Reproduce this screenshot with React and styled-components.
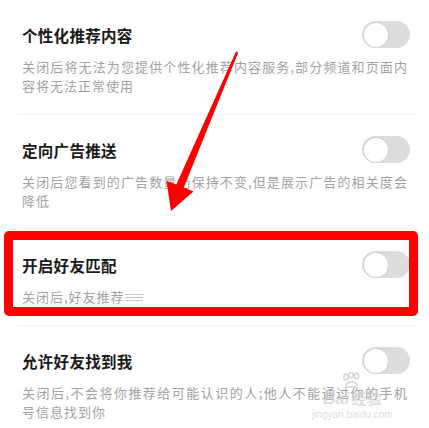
import React from 'react';
import styled, { createGlobalStyle } from 'styled-components';

const GlobalStyle = createGlobalStyle`
    html, body {
        margin: 0;
        padding: 0;
        background: #fff;
    }
    body {
        font-family: "Noto Sans CJK SC", "Noto Sans", sans-serif;
    }
`;

const Page = styled.div`
    position: relative;
    width: 429px;
    height: 428px;
    overflow: hidden;
    background: #fff;
`;
const Section = styled.div`
    position: relative;
    padding: 21px 0 19px;
`;
const Divider = styled.div`
    height: 1px;
    margin: 0 12px 0 18px;
    background: #f0f0f0;
`;
const Header = styled.div`
    display: flex;
    align-items: center;
    justify-content: space-between;
    height: 27px;
    padding: 0 19px 0 22px;
`;
const Title = styled.div`
    font-size: 15.5px;
    font-weight: 700;
    letter-spacing: 0.3px;
    color: #1a1a1a;
`;
const Toggle = styled.div`
    width: 48px;
    height: 27px;
    border-radius: 14px;
    background: #dcdcdc;
    display: flex;
    align-items: center;
    padding: 0 1.5px;
    box-sizing: border-box;
`;
const Knob = styled.div`
    width: 24px;
    height: 24px;
    border-radius: 50%;
    background: #fff;
    box-shadow: 0 0 0 1px #d2d2d2;
`;
const Desc = styled.div`
    margin-top: 9px;
    padding: 0 21px 0 22px;
    font-size: 13px;
    line-height: 19px;
    letter-spacing: 1px;
    text-align: justify;
    color: #a2a2a2;
`;
const Erased = styled.span`
    display: inline-block;
    width: 18px;
    height: 9px;
    vertical-align: middle;
    background: repeating-linear-gradient(
        to bottom,
        #c8c8c8 0 1px,
        transparent 1px 3px
    );
`;
// annotation overlays
const Frame = styled.div`
    position: absolute;
    top: 1px;
    left: 4px;
    width: 414px;
    height: 85px;
    border: 9px solid #fe0000;
    border-radius: 5px;
    box-sizing: border-box;
    pointer-events: none;
`;
const Overlay = styled.svg`
    position: absolute;
    top: 0;
    left: 0;
    pointer-events: none;
`;
const Watermark = styled.div`
    position: absolute;
    left: 312px;
    top: 372px;
    display: flex;
    flex-direction: column;
    align-items: center;
    color: rgba(205, 205, 205, 0.7);
    font-family: "Liberation Sans", sans-serif;
    line-height: 1;
    pointer-events: none;
`;
const MarkLogo = styled.div`
    display: flex;
    align-items: baseline;
    gap: 2px;
    margin-top: 2px;
    font-size: 17px;
    font-weight: 700;
    font-style: italic;
    span {
        font-family: "Noto Sans CJK SC", sans-serif;
        font-style: normal;
        font-size: 15px;
    }
`;
const MarkUrl = styled.div`
    font-size: 10px;
    margin-top: 3px;
`;

const items = [
    {
        title: '个性化推荐内容',
        desc: '关闭后将无法为您提供个性化推荐内容服务,部分频道和页面内容将无法正常使用',
    },
    {
        title: '定向广告推送',
        desc: '关闭后您看到的广告数量仍保持不变,但是展示广告的相关度会降低',
    },
    {
        title: '开启好友匹配',
        desc: '关闭后,好友推荐',
        erased: true,
        marked: true,
    },
    {
        title: '允许好友找到我',
        desc: '关闭后,不会将你推荐给可能认识的人;他人不能通过你的手机号信息找到你',
    },
];

//*********************************
const App = () => {
    return (
        <Page>
            <GlobalStyle/>
            {items.map((item, i) =>
                <React.Fragment key={item.title}>
                    {i > 0 && <Divider/>}
                    <Section>
                        <Header>
                            <Title>{item.title}</Title>
                            <Toggle><Knob/></Toggle>
                        </Header>
                        <Desc>
                            {item.desc}
                            {item.erased && <Erased/>}
                        </Desc>
                        {item.marked && <Frame/>}
                    </Section>
                </React.Fragment>
            )}
            <Overlay width="429" height="428" viewBox="0 0 429 428">
                <polygon
                    fill="#fe0000"
                    points="236,51.5 238.2,52.5 183.8,187.5 193.5,191.5 171,211 166.5,181 176.3,184.5"
                />
            </Overlay>
            <Watermark>
                <svg width="22" height="16" viewBox="0 0 22 16">
                    <g fill="none" stroke="rgba(200,200,200,0.8)" strokeWidth="1.4">
                        <ellipse cx="5" cy="5" rx="2.2" ry="3"/>
                        <ellipse cx="10" cy="3" rx="2.2" ry="2.6"/>
                        <ellipse cx="15.5" cy="4" rx="2.2" ry="2.8"/>
                        <path d="M5 14 C6 9 14 8 16 13 C15 15.5 7 15.5 5 14 Z"/>
                    </g>
                </svg>
                <MarkLogo>Bai<span>经验</span></MarkLogo>
                <MarkUrl>jingyan.baidu.com</MarkUrl>
            </Watermark>
        </Page>
    );
}
export default App;
